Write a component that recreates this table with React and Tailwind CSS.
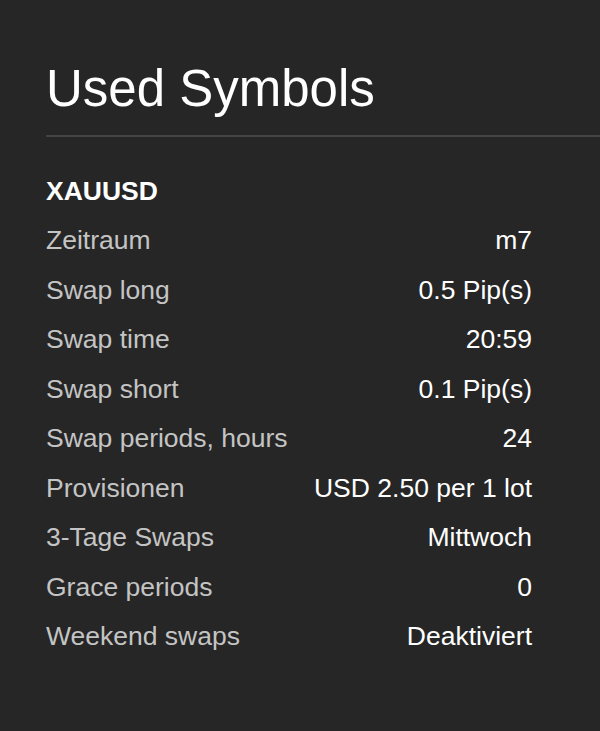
const rows = [
  ["Zeitraum", "m7"],
  ["Swap long", "0.5 Pip(s)"],
  ["Swap time", "20:59"],
  ["Swap short", "0.1 Pip(s)"],
  ["Swap periods, hours", "24"],
  ["Provisionen", "USD 2.50 per 1 lot"],
  ["3-Tage Swaps", "Mittwoch"],
  ["Grace periods", "0"],
  ["Weekend swaps", "Deaktiviert"],
];

export default function App() {
  return (
    <div className="min-h-[731px] bg-[#262626] pl-[46px] pt-[60px] font-['Liberation_Sans',Arial,sans-serif]">
      <h1 className="text-[51px] leading-[58px] text-white">Used Symbols</h1>
      <div className="mt-[17px] h-[2px] bg-[#444444]" />
      <div className="mt-[30px] w-[486px]">
        <div className="flex h-[49.5px] items-center text-[26.5px] font-bold text-white">XAUUSD</div>
        {rows.map(([label, value]) => (
          <div key={label} className="flex h-[49.5px] items-center justify-between text-[26.5px]">
            <span className="text-[#c4c4c4]">{label}</span>
            <span className="text-white">{value}</span>
          </div>
        ))}
      </div>
    </div>
  );
}
